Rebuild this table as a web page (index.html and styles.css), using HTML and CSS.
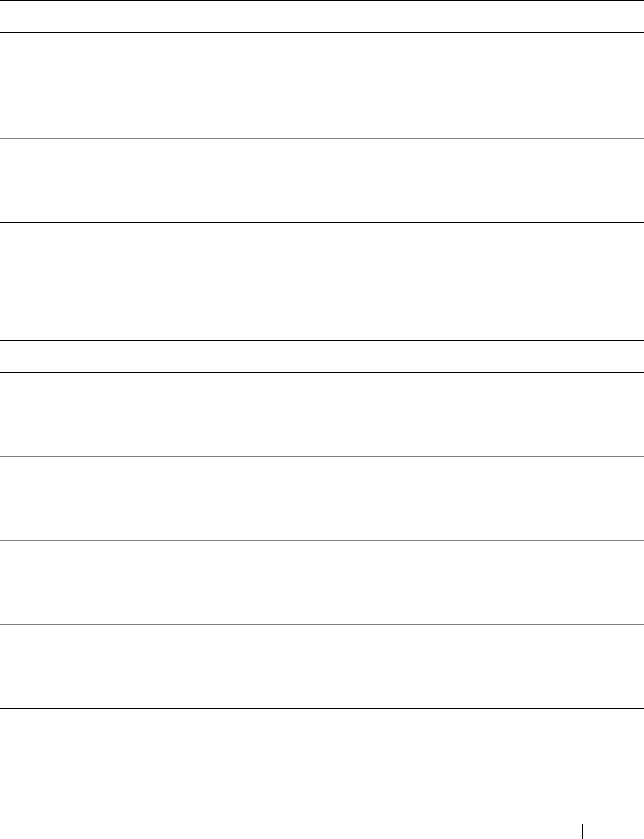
FILE: index.html
```html
<!DOCTYPE html>
<html>
<head>
<meta charset="utf-8">
<link rel="stylesheet" href="styles.css">
</head>
<body>
<div class="page">
  <div class="table">
    <div class="row head"></div>
    <div class="row r105"></div>
    <div class="row r83 last"></div>
  </div>
  <div class="table second">
    <div class="row head"></div>
    <div class="row r83"></div>
    <div class="row r83"></div>
    <div class="row r83"></div>
    <div class="row r83 last"></div>
  </div>
  <div class="footer"><span class="sep"></span></div>
</div>
</body>
</html>
```
FILE: styles.css
```css
html, body {
  margin: 0;
  padding: 0;
  background: #fff;
  font-family: "Liberation Serif", serif;
}
.page {
  width: 644px;
  height: 839px;
  overflow: hidden;
  display: flex;
  flex-direction: column;
}
.table {
  display: flex;
  flex-direction: column;
  border-top: 1px solid #000;
}
.table.second {
  margin-top: 117px;
}
.row {
  border-bottom: 1px solid #808080;
}
.row.head {
  height: 31px;
  border-bottom-color: #000;
}
.row.r105 { height: 105px; }
.row.r83 { height: 83px; }
.row.last { border-bottom-color: #000; }
.footer {
  display: flex;
  justify-content: flex-end;
  padding-right: 61px;
  margin-top: 115px;
}
.sep {
  display: block;
  width: 0;
  height: 15px;
  border-left: 1px solid #000;
}
```
